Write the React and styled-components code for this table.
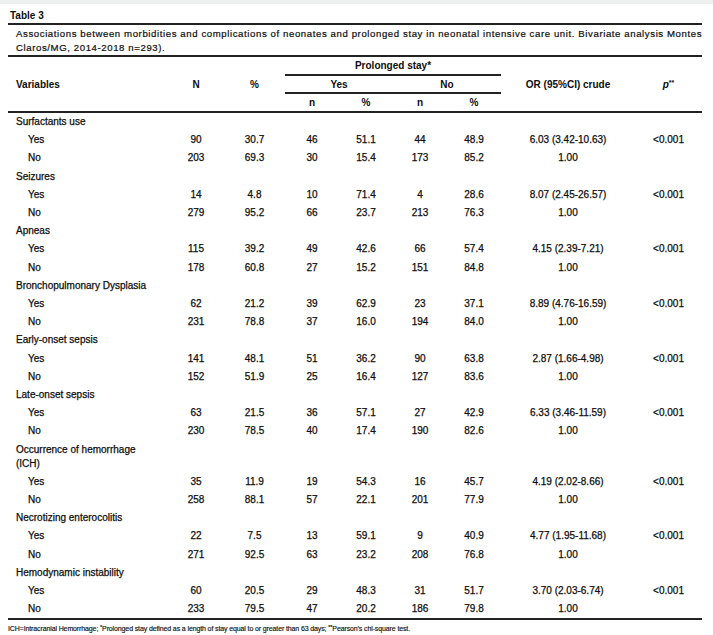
import React from "react";
import styled, { createGlobalStyle } from "styled-components";

const GlobalStyle = createGlobalStyle`
  body {
    margin: 0;
    background: #ffffff;
    font-family: "Liberation Sans", Arial, sans-serif;
    color: #0d0d0d;
  }
`;

const Page = styled.div`
  width: 713px;
  min-height: 635px;
  background: #ffffff;
`;

const TopStrip = styled.div`
  height: 4px;
  background: #eef0f0;
`;

const Sheet = styled.div`
  margin-left: 8px;
  width: 694px;
`;

const Title = styled.div`
  padding: 5px 0 0 2px;
  line-height: 14px;
  font-size: 10px;
  font-weight: bold;
  border-bottom: 2px solid #222;
`;

const Caption = styled.div`
  padding: 2px 0 0 8px;
  line-height: 14px;
  font-size: 9.6px;
  letter-spacing: 0.6px;
  white-space: nowrap;
  -webkit-text-stroke: 0.2px #0d0d0d;
  border-bottom: 2px solid #222;
`;

const Table = styled.table`
  width: 694px;
  border-collapse: separate;
  border-spacing: 0;
  table-layout: fixed;
  font-size: 10px;
`;

const Head = styled.th`
  padding: 0;
  font-weight: bold;
  text-align: ${(p) => (p.$left ? "left" : "center")};
  padding-left: ${(p) => (p.$left ? "8px" : "0")};
  vertical-align: middle;
  height: ${(p) => p.$h || "auto"};
  border-bottom: ${(p) => (p.$rule ? "2px solid #222" : "none")};
`;

const Cell = styled.td`
  padding: 0;
  line-height: 18.2px;
  text-align: center;
  white-space: nowrap;
  -webkit-text-stroke: 0.25px #0d0d0d;
  border-bottom: ${(p) => (p.$last ? "2px solid #222" : "none")};
`;

const LabelCell = styled.td`
  padding: ${(p) => (p.$wrap ? "2.1px" : "0")} 12px ${(p) => (p.$wrap ? "2.1px" : "0")} ${(p) => (p.$sub ? "20px" : "8px")};
  line-height: ${(p) => (p.$wrap ? "14px" : "18.2px")};
  text-align: left;
  -webkit-text-stroke: 0.25px #0d0d0d;
  border-bottom: ${(p) => (p.$last ? "2px solid #222" : "none")};
`;

const Stars = styled.sup`
  font-size: 7px;
  vertical-align: 3px;
  font-style: normal;
`;

const Footnote = styled.div`
  padding-top: 2px;
  font-family: "Liberation Sans Narrow", "Liberation Sans", Arial, sans-serif;
  font-size: 7px;
  letter-spacing: -0.12px;
  line-height: 11px;
  white-space: nowrap;
  -webkit-text-stroke: 0.15px #0d0d0d;
`;

const FootStar = styled.span`
  font-size: 5.5px;
  vertical-align: 2px;
`;

const widths = [160, 56, 61, 54, 54, 54, 54, 134, 67];

const groups = [
  {
    label: "Surfactants use",
    yes: ["90", "30.7", "46", "51.1", "44", "48.9", "6.03 (3.42-10.63)", "<0.001"],
    no: ["203", "69.3", "30", "15.4", "173", "85.2", "1.00", ""],
  },
  {
    label: "Seizures",
    yes: ["14", "4.8", "10", "71.4", "4", "28.6", "8.07 (2.45-26.57)", "<0.001"],
    no: ["279", "95.2", "66", "23.7", "213", "76.3", "1.00", ""],
  },
  {
    label: "Apneas",
    yes: ["115", "39.2", "49", "42.6", "66", "57.4", "4.15 (2.39-7.21)", "<0.001"],
    no: ["178", "60.8", "27", "15.2", "151", "84.8", "1.00", ""],
  },
  {
    label: "Bronchopulmonary Dysplasia",
    yes: ["62", "21.2", "39", "62.9", "23", "37.1", "8.89 (4.76-16.59)", "<0.001"],
    no: ["231", "78.8", "37", "16.0", "194", "84.0", "1.00", ""],
  },
  {
    label: "Early-onset sepsis",
    yes: ["141", "48.1", "51", "36.2", "90", "63.8", "2.87 (1.66-4.98)", "<0.001"],
    no: ["152", "51.9", "25", "16.4", "127", "83.6", "1.00", ""],
  },
  {
    label: "Late-onset sepsis",
    yes: ["63", "21.5", "36", "57.1", "27", "42.9", "6.33 (3.46-11.59)", "<0.001"],
    no: ["230", "78.5", "40", "17.4", "190", "82.6", "1.00", ""],
  },
  {
    label: "Occurrence of hemorrhage (ICH)",
    wrap: true,
    yes: ["35", "11.9", "19", "54.3", "16", "45.7", "4.19 (2.02-8.66)", "<0.001"],
    no: ["258", "88.1", "57", "22.1", "201", "77.9", "1.00", ""],
  },
  {
    label: "Necrotizing enterocolitis",
    yes: ["22", "7.5", "13", "59.1", "9", "40.9", "4.77 (1.95-11.68)", "<0.001"],
    no: ["271", "92.5", "63", "23.2", "208", "76.8", "1.00", ""],
  },
  {
    label: "Hemodynamic instability",
    yes: ["60", "20.5", "29", "48.3", "31", "51.7", "3.70 (2.03-6.74)", "<0.001"],
    no: ["233", "79.5", "47", "20.2", "186", "79.8", "1.00", ""],
  },
];

const DataRow = ({ label, values, last }) => (
  <tr>
    <LabelCell $sub $last={last}>{label}</LabelCell>
    {values.map((v, i) => (
      <Cell key={i} $last={last}>{v}</Cell>
    ))}
  </tr>
);

const App = () => {
  return (
    <Page>
      <GlobalStyle />
      <TopStrip />
      <Sheet>
        <Title>Table 3</Title>
        <Caption>
          Associations between morbidities and complications of neonates and prolonged stay in neonatal intensive care unit. Bivariate analysis Montes
          <br />
          Claros/MG, 2014-2018 n=293).
        </Caption>
        <Table>
          <colgroup>
            {widths.map((w, i) => (
              <col key={i} style={{ width: w }} />
            ))}
          </colgroup>
          <thead>
            <tr>
              <Head $left $rule rowSpan={3}>Variables</Head>
              <Head $rule rowSpan={3}>N</Head>
              <Head $rule rowSpan={3}>%</Head>
              <Head $rule colSpan={4} $h="17px">Prolonged stay*</Head>
              <Head $rule rowSpan={3}>OR (95%CI) crude</Head>
              <Head $rule rowSpan={3}>
                <i>p</i>
                <Stars>**</Stars>
              </Head>
            </tr>
            <tr>
              <Head $rule colSpan={2} $h="16px">Yes</Head>
              <Head $rule colSpan={2} $h="16px">No</Head>
            </tr>
            <tr>
              <Head $rule $h="17px">n</Head>
              <Head $rule $h="17px">%</Head>
              <Head $rule $h="17px">n</Head>
              <Head $rule $h="17px">%</Head>
            </tr>
          </thead>
          <tbody>
            {groups.map((g, gi) => {
              const last = gi === groups.length - 1;
              return (
                <React.Fragment key={g.label}>
                  <tr>
                    <LabelCell $wrap={g.wrap}>{g.label}</LabelCell>
                    {g.yes.map((_, i) => (
                      <Cell key={i} />
                    ))}
                  </tr>
                  <DataRow label="Yes" values={g.yes} />
                  <DataRow label="No" values={g.no} last={last} />
                </React.Fragment>
              );
            })}
          </tbody>
        </Table>
        <Footnote>
          ICH=Intracranial Hemorrhage; <FootStar>*</FootStar>Prolonged stay defined as a length of stay equal to or greater than 63 days; <FootStar>**</FootStar>Pearson’s chi-square test.
        </Footnote>
      </Sheet>
    </Page>
  );
};

export default App;
